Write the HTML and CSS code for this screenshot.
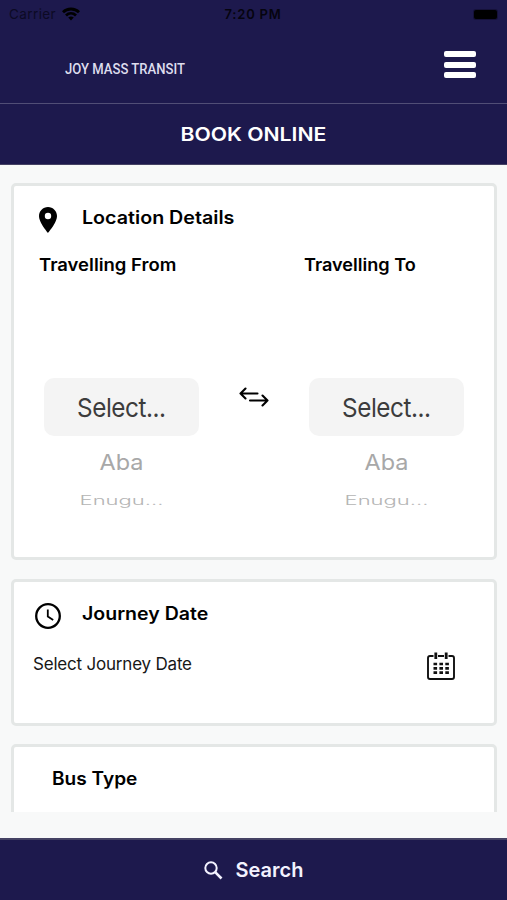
FILE: index.html
```html
<!DOCTYPE html>
<html lang="en">
<head>
<meta charset="utf-8">
<title>Joy Mass Transit</title>
<link rel="stylesheet" href="styles.css">
</head>
<body>
<div class="app">
  <header class="header">
    <div class="status">
      <div class="carrier"><span>Carrier</span>
        <svg width="18" height="14" viewBox="0 0 18 14" fill="none" stroke="#000" stroke-width="2.8"><path d="M1 5.2C5.3 .9 12.700 .9 17 5.200M4 8.500C6.900 5.700 11.100 5.700 14 8.500"/><path d="M9 13.500L6.200 10.600Q9 8.300 11.800 10.600Z" fill="#000" stroke="none"/></svg>
      </div>
      <time class="clock">7:20 PM</time>
      <div class="battery-slot"><i class="battery"></i></div>
    </div>
    <div class="brand-row">
      <span class="brand">JOY MASS TRANSIT</span>
      <button class="menu" aria-label="Menu"><i></i><i></i><i></i></button>
    </div>
  </header>
  <h1 class="title"><span>BOOK ONLINE</span></h1>
  <main class="content">
    <section class="card location">
      <div class="card-head">
        <svg class="pin" width="18" height="26" viewBox="0 0 18 26"><path fill-rule="evenodd" d="M9 0C4 0 0 4 0 9.100C0 15.800 9 26 9 26S18 15.800 18 9.100C18 4 14 0 9 0ZM9 5.800a3.200 3.200 0 1 1 0 6.400a3.200 3.200 0 0 1 0-6.400Z"/></svg>
        <h2 class="h-location">Location Details</h2>
      </div>
      <div class="route">
        <div class="stop">
          <h3 class="l-from">Travelling From</h3>
          <div class="picker">
            <div class="selected"><span>Select...</span></div>
            <div class="next"><span>Aba</span></div>
            <div class="far"><span>Enugu...</span></div>
          </div>
        </div>
        <svg class="swap" width="30" height="20" viewBox="0 0 30 20" fill="none" stroke="#000" stroke-width="2.100" stroke-linecap="round" stroke-linejoin="round"><path d="M18.500 6.500H1.500M6.500 1.500L1.500 6.500L6.500 11.500M11 13.500H28.500M23.500 8.500L28.500 13.500L23.500 18.500"/></svg>
        <div class="stop">
          <h3 class="l-to">Travelling To</h3>
          <div class="picker">
            <div class="selected"><span>Select...</span></div>
            <div class="next"><span>Aba</span></div>
            <div class="far"><span>Enugu...</span></div>
          </div>
        </div>
      </div>
    </section>
    <section class="card journey">
      <div class="card-head">
        <svg class="watch" width="26" height="26" viewBox="0 0 26 26" fill="none" stroke="#000"><circle cx="13" cy="13" r="11.800" stroke-width="2.300"/><path d="M12.800 6.500V13.500L18.200 17" stroke-width="1.800"/></svg>
        <h2 class="h-journey">Journey Date</h2>
      </div>
      <div class="date-row">
        <span class="date">Select Journey Date</span>
        <svg class="calendar" width="28" height="28" viewBox="0 0 28 28"><path d="M6.500 4H3Q1 4 1 6V25Q1 27 3 27H25Q27 27 27 25V6Q27 4 25 4H21.500M11 4H17" fill="none" stroke="#111" stroke-width="1.900"/><path d="M8.800 .5V7M19.200 .5V7" stroke="#111" stroke-width="2.800"/><path d="M6.500 12H22M6.500 16.300H22M6.500 20.600H22" stroke="#111" stroke-width="2.700" stroke-dasharray="3.600 2.300"/></svg>
      </div>
    </section>
    <section class="card bus"><h2 class="h-bus">Bus Type</h2></section>
  </main>
  <button class="search">
    <svg width="19" height="19" viewBox="0 0 19 19" fill="none" stroke="#f3f2ff" stroke-width="2"><circle cx="7" cy="7" r="5.700"/><path d="M11.200 11.200L17.500 17.500" stroke-width="2.600"/></svg>
    <span>Search</span>
  </button>
</div>
</body>
</html>
```
FILE: styles.css
```css
* { box-sizing: border-box; }
body { margin: 0; font-family: Inter, "Liberation Sans", sans-serif; color: #000; background: #f8f9f9; }
h1, h2, h3 { margin: 0; font-weight: 600; white-space: nowrap; }
button { border: 0; padding: 0; background: none; font: inherit; }
svg { display: block; flex: none; }
.app { height: 900px; display: flex; flex-direction: column; overflow: hidden; }
.header { height: 104px; background: #1d194d; border-bottom: 1px solid #514e76; }
.status { height: 28px; display: grid; grid-template-columns: 1fr auto 1fr; align-items: center; padding: 0 10px 0 9px; font-size: 13.500px; color: #05040f; }
.carrier { display: flex; gap: 6px; align-items: center; color: #0c0a24; letter-spacing: .4px; }
.clock { font-weight: 600; font-size: 13px; letter-spacing: .8px; }
.battery-slot { display: flex; justify-content: flex-end; }
.battery { width: 23px; height: 9px; border-radius: 2px; background: #000; box-shadow: 0 0 0 1px #151139; }
.brand-row { display: flex; justify-content: space-between; align-items: flex-start; padding: 23px 31px 0 65px; }
.brand { font: 500 14px/20px Roboto, sans-serif; color: #dedded; margin-top: 8px; transform-origin: left; transform: scaleX(.935); }
.menu { width: 32px; display: grid; gap: 4.500px; }
.menu i { height: 6px; background: #fff; border-radius: 2px; }
.title { height: 61px; flex: none; background: #1d194d; border-bottom: 1px solid #454264; color: #fff; font-size: 19px; line-height: 61px; text-align: center; }
.title span { display: inline-block; transform: scaleX(1.115); }
.content { height: 647px; flex: none; padding: 18px 10px 0 11px; overflow: hidden; display: flex; flex-direction: column; gap: 19px; }
.card { flex: none; background: #fff; border: 3px solid #e4e7e6; border-radius: 5px; }
.card h2 { font-size: 18px; line-height: 25px; }
.card h2, .card h3 { transform-origin: left; }
.h-location { transform: scaleX(1.093); }
.h-journey { transform: scaleX(1.085); }
.h-bus { transform: scaleX(1.06); }
.l-from { transform: scaleX(1.087); }
.l-to { transform: scaleX(1.065); }
.card-head { display: flex; }
.location { height: 377px; padding: 19px 25px 0 25px; }
.pin { margin: 2px 25px 0 0; }
.route { display: flex; justify-content: space-between; margin-top: 20px; }
.stop { width: 165px; }
.stop h3 { font-size: 17px; line-height: 24px; }
.picker { width: 155px; margin: 101px 0 0 5px; text-align: center; }
.selected { height: 58px; border-radius: 10px; background: #f4f4f4; color: #3c3c3c; font-size: 26px; line-height: 59px; letter-spacing: -.5px; }
.next { height: 50px; color: #a8a8a8; font-size: 23.500px; line-height: 54px; }
.far { height: 28px; color: #b4b4b4; font-size: 22px; font-weight: 300; line-height: 28px; }
.selected span, .next span, .far span { display: inline-block; }
.selected span { transform: scaleX(.935); }
.next span { transform: scaleY(.91); }
.far span { transform: scaleY(.58); }
.swap { margin: 134px 0 0 0; }
.journey { height: 147px; padding: 19px 39px 0 19px; }
.watch { margin: 2px 21px 0 2px; }
.date-row { display: flex; justify-content: space-between; align-items: flex-start; margin-top: 23px; }
.date { font-size: 17px; line-height: 25px; color: #171717; letter-spacing: -.2px; }
.calendar { margin-top: 0; }
.bus { height: 147px; padding: 19px 38px; margin-top: -1px; }
.search { height: 62px; margin-top: auto; flex: none; background: #1d194d; border-top: 2px solid #454264; color: #f3f2ff; display: flex; align-items: center; justify-content: center; gap: 13px; font-size: 20px; font-weight: 600; }
```
